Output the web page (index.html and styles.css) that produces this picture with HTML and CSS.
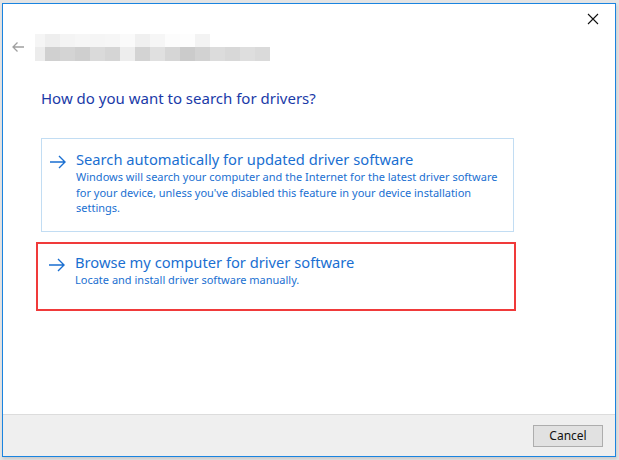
FILE: index.html
```html
<!DOCTYPE html>
<html lang="en">
<head>
    <meta charset="UTF-8">
    <title>Update Drivers</title>
    <link rel="stylesheet" href="styles.css">
</head>
<body>
    <div class="window">
        <div class="titlebar">
            <button class="close-btn" aria-label="Close">
                <svg width="12" height="12" viewBox="0 0 12 12"><path d="M1 1L11 11M11 1L1 11" stroke="#111" stroke-width="1.1" fill="none"/></svg>
            </button>
        </div>

        <div class="nav-row">
            <svg class="back-arrow" width="14" height="12" viewBox="0 0 14 12"><path d="M13 6H2M6.5 1.5L2 6l4.5 4.5" stroke="#a0a0a0" stroke-width="1.3" fill="none"/></svg>
            <div class="blurred-title">
                <div class="mosaic-row top">
                    <span style="background:#f5f5f5"></span><span style="background:#eeeeee"></span><span style="background:#f4f4f4"></span><span style="background:#f6f6f6"></span><span style="background:#f5f5f5"></span><span style="background:#f6f6f6"></span><span style="background:#fafafa"></span><span style="background:#f0f0f0"></span><span style="background:#f6f6f6"></span><span style="background:#fcfcfc"></span><span style="background:#fdfdfd"></span><span style="background:#f3f3f3"></span>
                </div>
                <div class="mosaic-row">
                    <span style="background:#ececec"></span><span style="background:#d0d0d0"></span><span style="background:#d4d4d4"></span><span style="background:#cfcfcf"></span><span style="background:#dadada"></span><span style="background:#d5d5d5"></span><span style="background:#ededed"></span><span style="background:#d3d3d3"></span><span style="background:#e0e0e0"></span><span style="background:#d6d6d6"></span><span style="background:#cbcbcb"></span><span style="background:#d2d2d2"></span><span style="background:#dcdcdc"></span><span style="background:#d8d8d8"></span><span style="background:#dedede"></span><span style="background:#dadada"></span>
                </div>
            </div>
        </div>

        <div class="content">
            <h1 class="question">How do you want to search for drivers?</h1>

            <div class="option">
                <svg class="option-arrow" width="18" height="14" viewBox="0 0 18 14"><path d="M1 7H16M10 1l6 6-6 6" stroke="#1a6fd1" stroke-width="1.4" fill="none"/></svg>
                <div class="option-text">
                    <div class="option-title">Search automatically for updated driver software</div>
                    <div class="option-desc">Windows will search your computer and the Internet for the latest driver software for your device, unless you've disabled this feature in your device installation settings.</div>
                </div>
            </div>

            <div class="option highlighted">
                <svg class="option-arrow" width="18" height="14" viewBox="0 0 18 14"><path d="M1 7H16M10 1l6 6-6 6" stroke="#1a6fd1" stroke-width="1.4" fill="none"/></svg>
                <div class="option-text">
                    <div class="option-title">Browse my computer for driver software</div>
                    <div class="option-desc">Locate and install driver software manually.</div>
                </div>
            </div>
        </div>

        <div class="footer">
            <button class="cancel-btn">Cancel</button>
        </div>
    </div>
</body>
</html>
```

FILE: styles.css
```css
* {
    margin: 0;
    padding: 0;
    box-sizing: border-box;
}

body {
    background-color: #e4e4e4;
    font-family: 'Noto Sans', 'Open Sans', sans-serif;
    padding: 3px 3px 3px 2px;
    height: 460px;
    overflow: hidden;
}

.window {
    height: 454px;
    background: white;
    border: 1px solid #1a84e0;
    display: flex;
    flex-direction: column;
    box-shadow: 1px 2px 3px rgba(0,0,0,0.12);
}

.titlebar {
    height: 28px;
    display: flex;
    justify-content: flex-end;
}

.close-btn {
    width: 45px;
    height: 28px;
    border: none;
    background: transparent;
    display: flex;
    align-items: center;
    justify-content: center;
    padding-top: 2px;
}

.nav-row {
    display: flex;
    align-items: center;
    height: 30px;
}

.back-arrow {
    margin-left: 8px;
    margin-right: 10px;
}

.blurred-title {
    filter: blur(0.6px);
}

.mosaic-row {
    display: flex;
    height: 14px;
}

.mosaic-row.top {
    height: 13px;
}

.mosaic-row span {
    width: 15px;
    display: block;
}

.mosaic-row span:first-child {
    width: 10px;
}

.content {
    flex: 1;
    padding: 0 0 0 38px;
}

.question {
    font-size: 15px;
    font-weight: normal;
    color: #1a3aa8;
    margin-top: 26px;
    margin-bottom: 30px;
}

.option {
    display: flex;
    width: 473px;
    border: 1px solid #c2ddf3;
    padding: 10px 8px 15px 7px;
    margin-left: 0;
}

.option.highlighted {
    width: 480px;
    margin-left: -5px;
    margin-top: 10px;
    border: 2px solid #f03a3a;
    padding: 8px 8px 22px 10px;
}

.option-arrow {
    margin-top: 6px;
    margin-right: 9px;
    flex-shrink: 0;
}

.option-title {
    font-size: 14.7px;
    color: #1a6fd1;
    line-height: 20px;
}

.option-desc {
    font-size: 11px;
    color: #1a6fd1;
    line-height: 15.5px;
}

.footer {
    height: 42px;
    background: #efefef;
    border-top: 1px solid #dcdcdc;
    display: flex;
    justify-content: flex-end;
    align-items: center;
    padding-right: 12px;
}

.cancel-btn {
    width: 70px;
    height: 22px;
    background: #e1e1e1;
    border: 1px solid #adadad;
    font-family: 'Noto Sans', sans-serif;
    font-size: 12px;
    color: #111;
}
```
